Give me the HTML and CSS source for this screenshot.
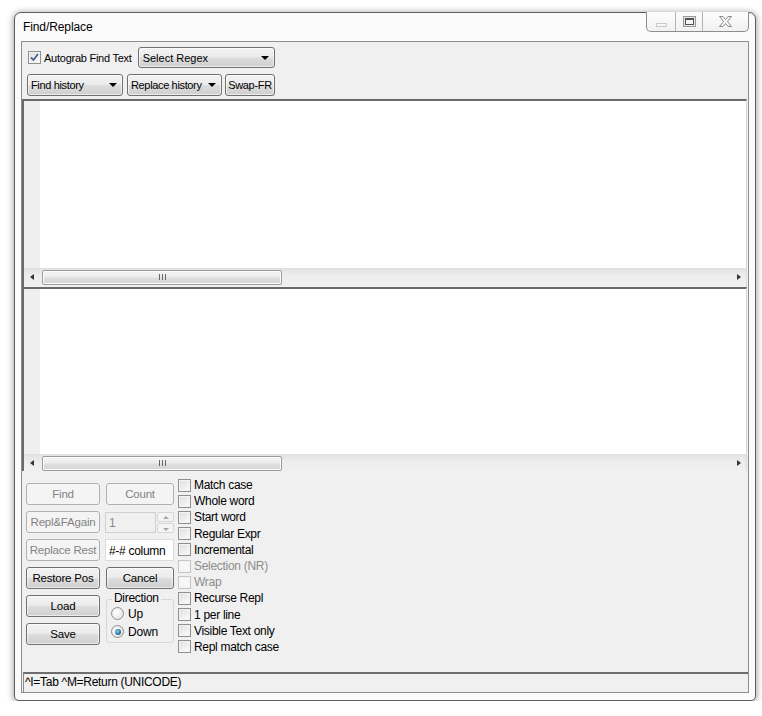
FILE: index.html
```html
<!DOCTYPE html>
<html>
<head>
<meta charset="utf-8">
<title>Find/Replace</title>
<link rel="stylesheet" href="styles.css">
</head>
<body>
<div class="window">
  <div class="titlebar">
    <span class="title">Find/Replace</span>
    <div class="caption">
      <span class="cbtn cmin"><i class="minbar"></i></span>
      <span class="cbtn cmax"><i class="maxbox"></i></span>
      <span class="cbtn cclose">
        <svg width="15" height="13" viewBox="0 0 15 13"><path d="M1.5 1.5h3.5l2.5 3 2.5-3h3.5l-4 5 4 5h-3.5l-2.5-3-2.5 3h-3.5l4-5z" fill="#f4f4f4" stroke="#8a8a8a" stroke-width="1"/></svg>
      </span>
    </div>
  </div>
  <div class="client">
    <div class="toolbar">
      <div class="row row1">
        <label class="chk">
          <span class="box on"><svg width="11" height="11" viewBox="0 0 11 11"><path d="M2 5.5l2.5 2.5 4.5-6" fill="none" stroke="#4a5f97" stroke-width="1.8"/></svg></span>
          <span class="lbl">Autograb Find Text</span>
        </label>
        <span class="combo w-regex">Select Regex<i class="arrow"></i></span>
      </div>
      <div class="row row2">
        <span class="combo w-find">Find history<i class="arrow"></i></span>
        <span class="combo w-repl">Replace history<i class="arrow"></i></span>
        <span class="btn w-swap">Swap-FR</span>
      </div>
    </div>

    <div class="editor ed1">
      <div class="ed-body"><div class="gutter"></div><div class="text"></div></div>
      <div class="hscroll">
        <span class="sarrow left"><i></i></span>
        <span class="thumb"><i class="grip"></i></span>
        <span class="track"></span>
        <span class="sarrow right"><i></i></span>
      </div>
    </div>

    <div class="editor ed2">
      <div class="ed-body"><div class="gutter"></div><div class="text"></div></div>
      <div class="hscroll">
        <span class="sarrow left"><i></i></span>
        <span class="thumb"><i class="grip"></i></span>
        <span class="track"></span>
        <span class="sarrow right"><i></i></span>
      </div>
    </div>

    <div class="panel">
      <div class="btngrid">
        <span class="btn dis">Find</span>
        <span class="btn dis">Count</span>
        <span class="btn dis">Repl&amp;FAgain</span>
        <div class="spin">
          <span class="spintext">1</span>
          <span class="spinbtns"><i class="up"></i><i class="down"></i></span>
        </div>
        <span class="btn dis">Replace Rest</span>
        <span class="textbox">#-# column</span>
        <span class="btn">Restore Pos</span>
        <span class="btn">Cancel</span>
        <span class="btn">Load</span>
        <div class="group">
          <span class="legend">Direction</span>
          <label class="radio"><span class="rad"></span>Up</label>
          <label class="radio"><span class="rad on"></span>Down</label>
        </div>
        <span class="btn">Save</span>
      </div>
      <ul class="checks">
        <li><span class="box"></span>Match case</li>
        <li><span class="box"></span>Whole word</li>
        <li><span class="box"></span>Start word</li>
        <li><span class="box"></span>Regular Expr</li>
        <li><span class="box"></span>Incremental</li>
        <li class="disabled"><span class="box"></span>Selection (NR)</li>
        <li class="disabled"><span class="box"></span>Wrap</li>
        <li><span class="box"></span>Recurse Repl</li>
        <li><span class="box"></span>1 per line</li>
        <li><span class="box"></span>Visible Text only</li>
        <li><span class="box"></span>Repl match case</li>
      </ul>
    </div>

    <div class="status">^I=Tab ^M=Return (UNICODE)</div>
  </div>
</div>
</body>
</html>
```

FILE: styles.css
```css
html, body {
  margin: 0;
  padding: 0;
  background: #ffffff;
}
body {
  font-family: "Liberation Sans", Arial, sans-serif;
  font-size: 11px;
  color: #000;
}

.window {
  margin: 12px 0 0 14px;
  width: 742px;
  height: 689px;
  box-sizing: border-box;
  border: 1px solid #5e5e5e;
  border-radius: 7px 7px 5px 5px;
  background: #fbfbfb;
  box-shadow: 0 1px 6px 1px rgba(0, 0, 0, 0.35);
  display: flex;
  flex-direction: column;
}

/* title bar */
.titlebar {
  height: 28px;
  display: flex;
  align-items: flex-start;
  justify-content: space-between;
}
.title {
  font-size: 12px;
  line-height: 28px;
  padding-left: 8px;
  letter-spacing: -0.1px;
}
.caption {
  display: flex;
  margin-top: -1px;
  margin-right: 6px;
  height: 19px;
  border: 1px solid #8d8d8d;
  border-top: none;
  border-radius: 0 0 5px 5px;
  background: linear-gradient(#fdfdfd, #f1f1f1);
  overflow: hidden;
}
.cbtn {
  display: flex;
  align-items: center;
  justify-content: center;
  height: 19px;
}
.cmin { width: 28px; border-right: 1px solid #b5b5b5; }
.cmax { width: 26px; border-right: 1px solid #b5b5b5; }
.cclose { width: 45px; }
.minbar {
  display: block;
  width: 9px;
  height: 2px;
  margin-top: 6px;
  border: 1px solid #c9c9c9;
  background: #f7f7f7;
}
.maxbox {
  display: block;
  width: 7px;
  height: 4px;
  border: 1px solid #555;
  border-top-width: 2px;
  box-shadow: 0 0 0 1px #e6e6e6, 0 0 0 2px #9a9a9a;
}

/* client area */
.client {
  margin: 0 6px 7px;
  flex: 1;
  border: 1px solid #8f8f8f;
  background: #f0f0f0;
  display: flex;
  flex-direction: column;
}

.toolbar {
  padding: 5px 0 3px 5px;
  display: flex;
  flex-direction: column;
  gap: 6px;
}
.row {
  display: flex;
  align-items: center;
}
.row1 { height: 21px; }
.row2 { height: 22px; gap: 4px; }
.row2 .w-swap { margin-left: -1px; }

.chk {
  display: flex;
  align-items: center;
  margin-left: 1px;
}
.chk .lbl { margin-left: 3px; letter-spacing: -0.25px; }

.box {
  display: inline-flex;
  align-items: center;
  justify-content: center;
  width: 13px;
  height: 13px;
  box-sizing: border-box;
  border: 1px solid #8e8f8f;
  background: linear-gradient(135deg, #dcdcdc, #f7f7f7 80%);
  box-shadow: inset 0 0 0 1px #f4f4f4;
  flex: none;
}

.combo, .btn {
  display: flex;
  align-items: center;
  box-sizing: border-box;
  border: 1px solid #707070;
  border-radius: 3px;
  background: linear-gradient(#f3f3f3 0%, #ebebeb 48%, #dddddd 52%, #cfcfcf 100%);
  box-shadow: inset 0 0 0 1px rgba(255, 255, 255, 0.6);
  height: 22px;
  white-space: nowrap;
}
.combo {
  padding-left: 3px;
  justify-content: space-between;
  letter-spacing: -0.35px;
}
.arrow {
  width: 0;
  height: 0;
  border-left: 4px solid transparent;
  border-right: 4px solid transparent;
  border-top: 4px solid #000;
  margin-right: 5px;
  flex: none;
}
.w-regex { width: 137px; height: 21px; margin-left: 6px; padding-left: 4px; letter-spacing: 0; }
.w-find { width: 96px; }
.w-repl { width: 95px; }
.w-swap { width: 50px; justify-content: center; letter-spacing: -0.3px; }
.btn { justify-content: center; }

/* editors */
.editor {
  box-sizing: border-box;
  border-top: 2px solid #6a6a6a;
  border-left: 2px solid #6a6a6a;
  border-right: 1px solid #d9d9d9;
  margin-right: 1px;
  display: flex;
  flex-direction: column;
}
.ed1 { height: 188px; padding-bottom: 2px; }
.ed2 { height: 184px; }
.ed-body {
  flex: 1;
  display: flex;
}
.gutter {
  width: 16px;
  background: #efefef;
}
.text {
  flex: 1;
  background: #fff;
}
.hscroll {
  height: 17px;
  box-sizing: border-box;
  border-top: 1px solid #dedede;
  background: linear-gradient(#e3e3e3, #ededed 40%, #f0f0f0);
  display: flex;
  align-items: center;
}
.sarrow {
  width: 17px;
  height: 16px;
  display: flex;
  align-items: center;
  justify-content: center;
}
.sarrow i {
  width: 0;
  height: 0;
  border-top: 3px solid transparent;
  border-bottom: 3px solid transparent;
}
.sarrow.left i { border-right: 4px solid #333; margin-right: 2px; }
.sarrow.right i { border-left: 4px solid #333; margin-left: 2px; }
.thumb {
  width: 240px;
  height: 15px;
  margin-left: 1px;
  box-sizing: border-box;
  border: 1px solid #9c9c9c;
  border-radius: 2px;
  background: linear-gradient(#f5f5f5 0%, #ececec 45%, #dedede 55%, #d6d6d6 100%);
  box-shadow: inset 0 0 0 1px #fbfbfb;
  display: flex;
  align-items: center;
  justify-content: center;
}
.grip {
  width: 7px;
  height: 6px;
  background: linear-gradient(90deg, #666 0 1px, transparent 1px 3px, #666 3px 4px, transparent 4px 6px, #666 6px 7px);
}
.track { flex: 1; }

/* bottom panel */
.panel {
  height: 201px;
  box-sizing: border-box;
  padding: 6px 0 0 4px;
  display: flex;
  align-items: flex-start;
}
.btngrid {
  margin-top: 6px;
  display: grid;
  grid-template-columns: 74px 68px;
  grid-auto-rows: 22px;
  column-gap: 6px;
  row-gap: 6px;
  font-size: 11.5px;
  letter-spacing: -0.2px;
}
.btn.dis {
  border-color: #adb2b5;
  background: #f4f4f4;
  box-shadow: none;
  color: #838383;
}
.spin {
  display: flex;
  margin-left: -1px;
  margin-top: 1px;
  height: 21px;
}
.spintext {
  width: 51px;
  box-sizing: border-box;
  border: 1px solid #cfcfcf;
  background: #f0f0f0;
  color: #8a8a8a;
  font-size: 12px;
  padding: 3px 0 0 3px;
}
.spinbtns {
  width: 17px;
  display: flex;
  flex-direction: column;
  gap: 1px;
  margin-left: 1px;
}
.spinbtns i {
  flex: 1;
  box-sizing: border-box;
  border: 1px solid #d6d6d6;
  border-radius: 2px;
  background: #f4f4f4;
  position: relative;
}
.spinbtns i::after {
  content: "";
  position: absolute;
  left: 5px;
  top: 3px;
  border-left: 3px solid transparent;
  border-right: 3px solid transparent;
}
.spinbtns .up::after { border-bottom: 3px solid #a5a5a5; }
.spinbtns .down::after { border-top: 3px solid #a5a5a5; top: 4px; }
.textbox {
  margin-left: -1px;
  box-sizing: border-box;
  border: 1px solid #dcdcdc;
  background: #fff;
  font-size: 12px;
  letter-spacing: -0.3px;
  padding: 4px 0 0 3px;
}
.group {
  grid-row: span 2;
  position: relative;
  box-sizing: border-box;
  border: 1px solid #d2d9de;
  border-radius: 3px;
  margin-top: 4px;
  height: 44px;
  padding: 7px 0 0 4px;
  display: flex;
  flex-direction: column;
  gap: 5px;
}
.legend {
  position: absolute;
  top: -9px;
  left: 5px;
  padding: 0 2px;
  background: #f0f0f0;
  font-size: 12px;
  letter-spacing: -0.3px;
}
.radio {
  display: flex;
  align-items: center;
  gap: 4px;
  font-size: 12px;
  height: 13px;
}
.rad {
  width: 13px;
  height: 13px;
  box-sizing: border-box;
  border-radius: 50%;
  border: 1px solid #8e8f8f;
  background: radial-gradient(circle at 40% 40%, #ffffff, #dcdcdc);
  display: flex;
  align-items: center;
  justify-content: center;
}
.rad.on::after {
  content: "";
  width: 6px;
  height: 6px;
  border-radius: 50%;
  background: radial-gradient(circle at 40% 40%, #8ed0f2, #1d5d91 70%);
}

.checks {
  list-style: none;
  margin: 0 0 0 4px;
  padding: 0;
}
.checks li {
  height: 16.2px;
  display: flex;
  align-items: center;
  gap: 3px;
  font-size: 12px;
  letter-spacing: -0.3px;
}
.checks li.disabled {
  color: #8d8d8d;
}
.checks li.disabled .box {
  border-color: #c6c6c6;
  background: #f6f6f6;
}

.status {
  height: 20px;
  box-sizing: border-box;
  border-top: 2px solid #6d6d6d;
  border-left: 1px solid #8a8a8a;
  margin-left: 1px;
  padding: 1px 0 0 1px;
  font-size: 12px;
  letter-spacing: -0.3px;
}
```
